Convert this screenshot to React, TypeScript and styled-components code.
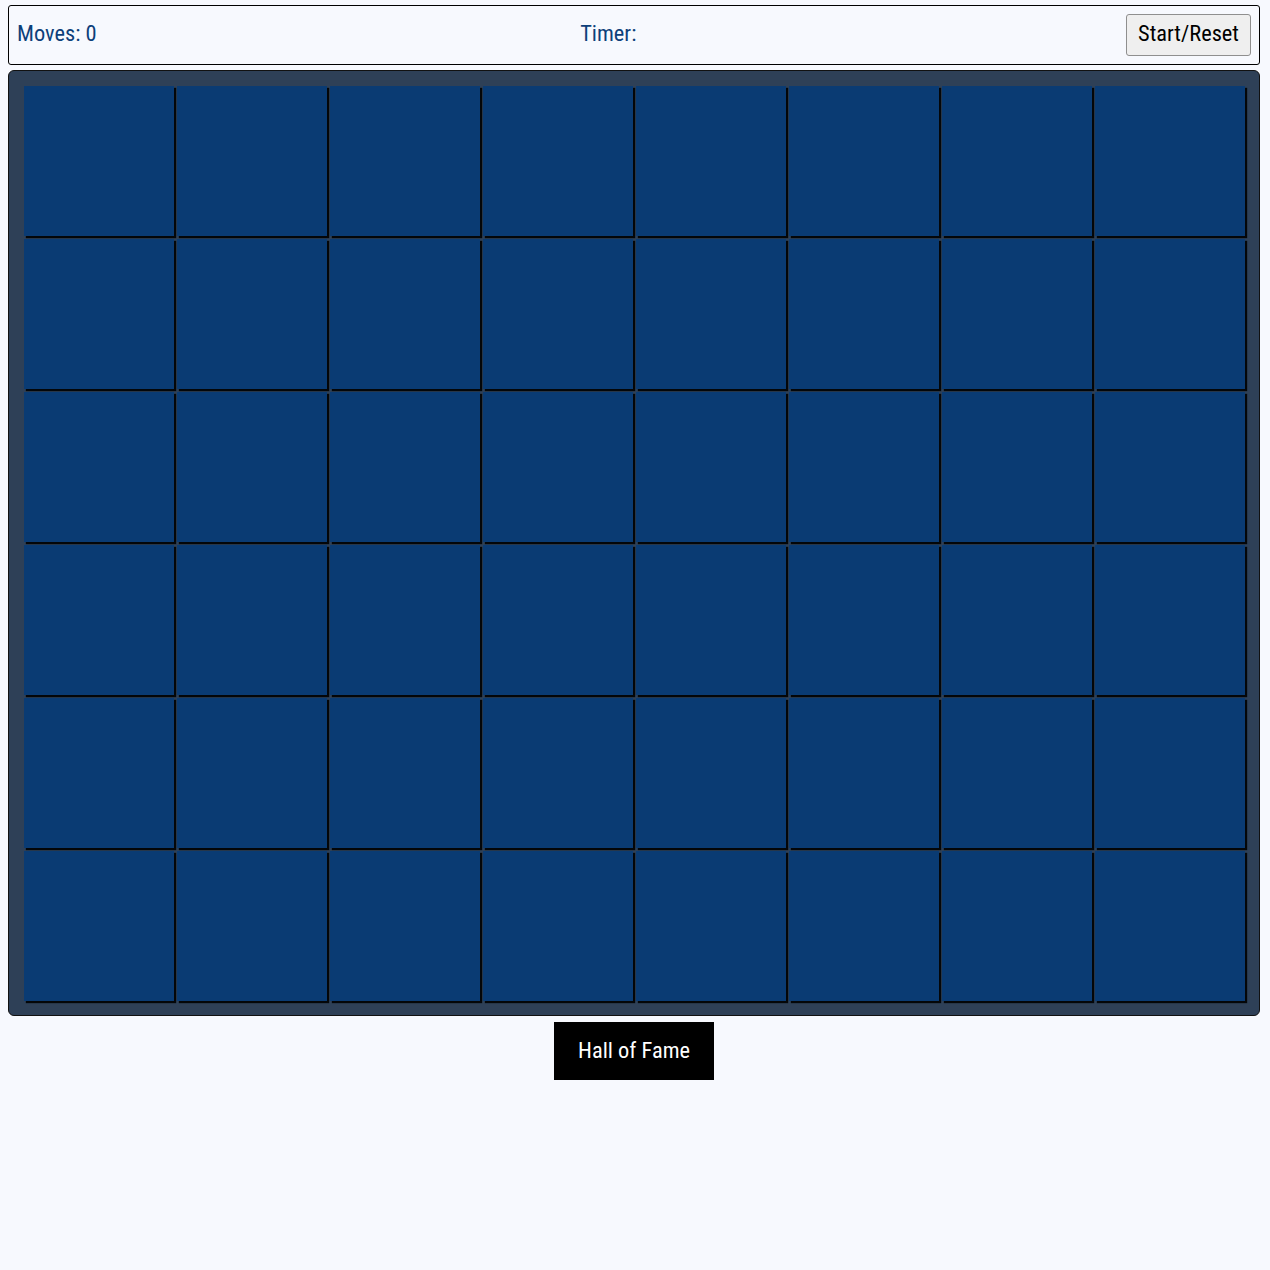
import React from "react";
import styled, { createGlobalStyle } from "styled-components";

const Global = createGlobalStyle`
  html, body { margin: 0; padding: 0; background: #f7f9fe; }
  body { padding: 5px 10px 8px 8px; font-family: "Roboto Condensed", "Roboto", "Liberation Sans", sans-serif; font-stretch: condensed; }
  * { box-sizing: border-box; }
`;

const Header = styled.header`
  display: flex;
  justify-content: space-between;
  align-items: center;
  height: 60px;
  padding: 0 8px;
  border: 1px solid #000;
  border-radius: 3px;
`;

const Stat = styled.span<{ $shift?: number }>`
  color: #0d3f7a;
  font-size: 22.4px;
  margin-bottom: 4px;
  margin-right: ${(p) => p.$shift ?? 0}px;
`;

const ResetButton = styled.button`
  font-family: inherit;
  font-stretch: condensed;
  font-size: 22.4px;
  color: #000;
  background: #efefef;
  border: 1px solid #8f8f8f;
  border-radius: 3px;
  height: 42px;
  padding: 0 11px 3px;
  margin-bottom: 1px;
`;

const Board = styled.main`
  margin-top: 5px;
  display: grid;
  grid-template-columns: repeat(8, 150px);
  grid-auto-rows: 150px;
  gap: 3px;
  justify-content: center;
  padding: 15px 0 14px;
  background: #2e4057;
  border: 1px solid #111;
  border-radius: 6px;
`;

const Card = styled.div`
  background: #0a3b73;
  box-shadow: 2px 2px 1px rgba(0, 0, 0, 0.9);
`;

const Footer = styled.div`
  display: flex;
  justify-content: center;
  margin-top: 6px;
`;

const FameButton = styled.button`
  font-family: inherit;
  font-stretch: condensed;
  font-size: 22.4px;
  color: #fff;
  background: #000;
  border: none;
  width: 160px;
  height: 58px;
  padding-bottom: 4px;
`;

export default function App() {
  const cards = Array.from({ length: 48 }, (_, i) => i);
  return (
    <>
      <Global />
      <Header>
        <Stat>Moves: 0</Stat>
        <Stat $shift={6}>Timer: </Stat>
        <ResetButton>Start/Reset</ResetButton>
      </Header>
      <Board>
        {cards.map((i) => (
          <Card key={i} />
        ))}
      </Board>
      <Footer>
        <FameButton>Hall of Fame</FameButton>
      </Footer>
    </>
  );
}
